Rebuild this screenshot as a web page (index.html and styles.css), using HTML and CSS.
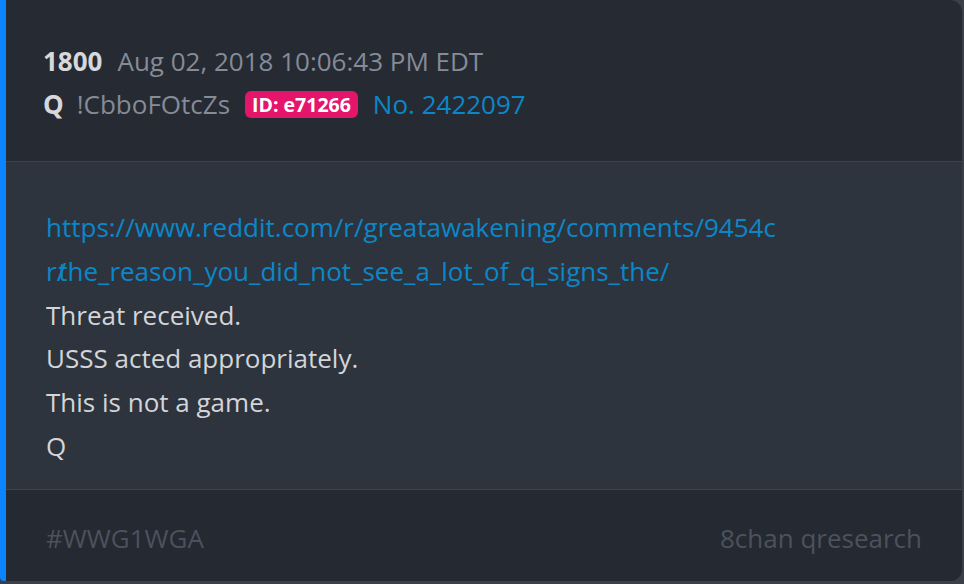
FILE: index.html
```html
<!DOCTYPE html>
<html lang="en">
<head>
  <meta charset="UTF-8">
  <title>Post 1800</title>
  <link rel="stylesheet" href="styles.css">
</head>
<body>

<div class="post">
  <div class="post-head">
    <div class="head-row">
      <span class="num">1800</span>
      <span class="meta">Aug 02, 2018 10:06:43 PM EDT</span>
    </div>
    <div class="head-row">
      <span class="num author">Q</span>
      <span class="meta">!CbboFOtcZs</span>
      <span class="badge">ID: e71266</span>
      <span class="post-no">No. 2422097</span>
    </div>
  </div>

  <div class="post-body">
    <a class="link" href="#">https://www.reddit.com/r/greatawakening/comments/9454c<br>r<span class="slash">/</span>the_reason_you_did_not_see_a_lot_of_q_signs_the/</a>
    <p>Threat received.</p>
    <p>USSS acted appropriately.</p>
    <p>This is not a game.</p>
    <p>Q</p>
  </div>

  <div class="post-foot">
    <span>#WWG1WGA</span>
    <span>8chan qresearch</span>
  </div>
</div>

</body>
</html>
```

FILE: styles.css
```css
html, body { margin: 0; height: 100%; }
body { background: #3b3f47; font-family: "Open Sans", sans-serif; font-size: 26px; line-height: 44px; }
.post { height: 581px; margin-right: 2px; background: #262a33; border-left: 6px solid #0a84ff; border-radius: 0 12px 12px 4px; overflow: hidden; display: flex; flex-direction: column; }
.post-head { padding: 40px 37px 35px; border-bottom: 1px solid #3d434d; }
.head-row { display: flex; align-items: center; gap: 15px; line-height: 43px; }
.num { color: #d6d8db; font-weight: bold; }
.author { margin-right: -2px; }
.meta { color: #858b97; }
.badge { background: #e5156b; color: #fff; font-weight: bold; font-size: 19.5px; line-height: 27px; padding: 0 7px; border-radius: 6px; }
.post-no { color: #0b87c8; }
.post-body { background: #2e343e; padding: 44px 40px 20px; color: #d3d5d8; line-height: 43.8px; border-bottom: 1px solid #3d434d; }
.post-body p { margin: 0; }
.link { color: #0b87c8; text-decoration: none; display: block; }
.slash { margin-right: -8px; }
.post-foot { flex: 1; display: flex; justify-content: space-between; padding: 26px 40px 0 40px; color: #4c525d; background: #252931; }
```
